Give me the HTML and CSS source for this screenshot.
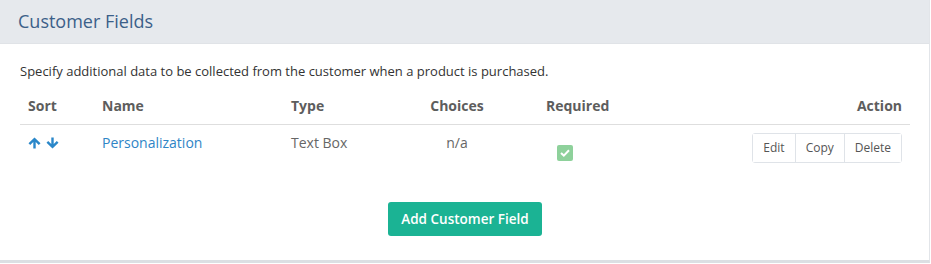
FILE: index.html
```html
<!DOCTYPE html>
<html>
<head>
<meta charset="utf-8">
<link rel="stylesheet" href="styles.css">
</head>
<body>
<div class="panel">
  <div class="panel-head"><h2 class="title">Customer Fields</h2></div>
  <div class="panel-body">
    <p class="desc">Specify additional data to be collected from the customer when a product is purchased.</p>
    <table class="fields">
      <colgroup>
        <col class="c-sort"><col class="c-name"><col class="c-type"><col class="c-choices"><col class="c-req"><col class="c-act">
      </colgroup>
      <thead>
        <tr>
          <th>Sort</th><th>Name</th><th>Type</th><th class="center">Choices</th><th class="req">Required</th><th class="right">Action</th>
        </tr>
      </thead>
      <tbody>
        <tr>
          <td class="sort">
            <svg class="arrow" width="13" height="12" viewBox="0 0 13 12"><path d="M6.5 0.5 L12.5 6.3 L10.8 8 L7.7 5 L7.7 11.5 L5.3 11.5 L5.3 5 L2.2 8 L0.5 6.3 Z" fill="#2a87c9"/></svg>
            <svg class="arrow" width="13" height="12" viewBox="0 0 13 12"><path d="M6.5 11.5 L12.5 5.7 L10.8 4 L7.7 7 L7.7 0.5 L5.3 0.5 L5.3 7 L2.2 4 L0.5 5.7 Z" fill="#2a87c9"/></svg>
          </td>
          <td><a class="name" href="#">Personalization</a></td>
          <td class="muted">Text Box</td>
          <td class="muted center">n/a</td>
          <td class="req"><span class="check"><svg width="10" height="8" viewBox="0 0 10 8"><path d="M1 4 L3.8 6.6 L9 1.3" fill="none" stroke="#fff" stroke-width="2"/></svg></span></td>
          <td class="right">
            <div class="btn-group"><button class="btn">Edit</button><button class="btn">Copy</button><button class="btn">Delete</button></div>
          </td>
        </tr>
      </tbody>
    </table>
    <div class="actions"><button class="add">Add Customer Field</button></div>
  </div>
</div>
</body>
</html>
```
FILE: styles.css
```css
html, body { margin: 0; padding: 0; background: #fff; }
body { font-family: "Open Sans", "Liberation Sans", sans-serif; color: #333; width: 931px; height: 264px; overflow: hidden; }
.panel { width: 929px; border-right: 1px solid #e2e5e9; border-bottom: 3px solid #dcdfe3; background: #fff; }
.panel-head { background: #e6e9ed; height: 43px; border-bottom: 1px solid #e0e3e7; display: flex; align-items: center; padding-left: 18px; }
.title { margin: 0; font-size: 18px; font-weight: 400; color: #3b6089; line-height: 1; position: relative; top: -1px; }
.panel-body { padding: 18px 19px 24px 20px; }
.desc { margin: 0 0 7px; font-size: 13px; line-height: 18.5px; color: #333; }
.fields { width: 890px; border-collapse: collapse; table-layout: fixed; font-size: 14px; }
.c-sort { width: 74px; } .c-name { width: 189px; } .c-type { width: 118px; } .c-choices { width: 112px; } .c-req { width: 187px; } .c-act { width: 210px; }
.fields th { text-align: left; font-weight: 700; color: #5d5d5d; padding: 8px 8px; line-height: 20px; border-bottom: 1px solid #dedede; }
.fields td { padding: 8px 8px; line-height: 20px; vertical-align: top; }
.fields .center { text-align: center; }
.fields .right { text-align: right; }
.fields .req { padding-left: 33px; }
.sort { padding-top: 12px !important; }
.arrow { display: inline-block; vertical-align: top; margin-right: 1px; }
.name { color: #2f85c6; text-decoration: none; }
.muted { color: #666; }
.check { display: inline-flex; align-items: center; justify-content: center; width: 16px; height: 16px; border-radius: 2px; background: #8ed19b; margin: 12px 0 0 11px; }
.btn-group { display: inline-flex; border: 1px solid #dfe3e8; border-radius: 3px; }
.btn { font-family: inherit; font-size: 12px; color: #555; background: #fff; border: 0; height: 28px; padding: 0 10px; line-height: 28px; }
.btn + .btn { border-left: 1px solid #dfe3e8; }
.actions { display: flex; justify-content: center; margin-top: 31px; }
.add { font-family: inherit; font-size: 13.5px; font-weight: 600; color: #fff; background: #1bb394; border: 0; border-radius: 3px; height: 34px; width: 154px; padding: 0; }
```
